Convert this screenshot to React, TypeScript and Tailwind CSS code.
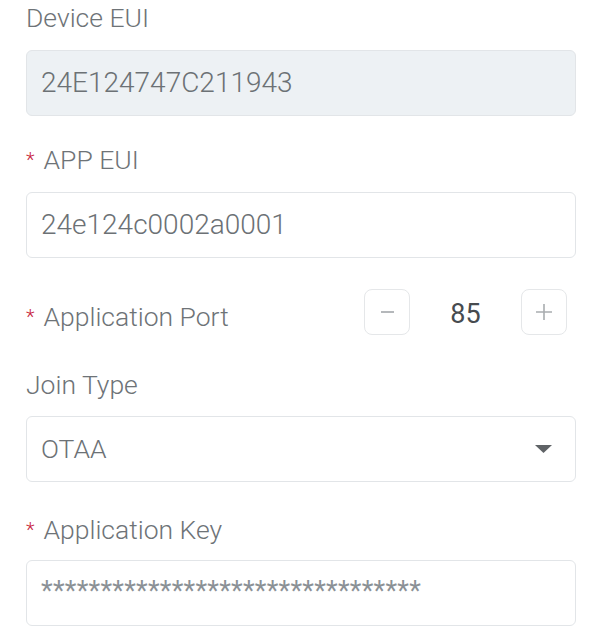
import React from 'react';

const Required = () => (
  <span className="text-[#c7253e] text-[20px] leading-none mr-[9px] self-start mt-[8px]">*</span>
);

const Label: React.FC<{ text: string; required?: boolean; className?: string }> = ({ text, required, className }) => (
  <div className={`flex items-center h-[36px] text-[26.5px] text-[#6e7377] ${className || ''}`}>
    {required && <Required />}
    <span>{text}</span>
  </div>
);

const Field: React.FC<{ children: React.ReactNode; disabled?: boolean }> = ({ children, disabled }) => (
  <div
    className={`flex items-center h-[66px] px-[14px] rounded-[6px] border border-[#e2e5e8] text-[28px] text-[#6c7175] ${
      disabled ? 'bg-[#edf1f4]' : 'bg-white'
    }`}
  >
    {children}
  </div>
);

export default function App() {
  return (
    <div className="w-[599px] h-[641px] bg-white pl-[26px] pr-[23px] font-['Roboto',sans-serif] font-light overflow-hidden">
      {/* Device EUI */}
      <Label text="Device EUI" className="mb-[14px]" />
      <Field disabled>24E124747C211943</Field>

      {/* APP EUI */}
      <Label text="APP EUI" required className="mt-[26px] mb-[14px]" />
      <Field>24e124c0002a0001</Field>

      {/* Application Port */}
      <div className="flex items-center justify-between h-[46px] mt-[31px]">
        <Label text="Application Port" required className="mt-[10px]" />
        <div className="flex items-center mr-[9px]">
          <button className="w-[46px] h-[46px] rounded-[8px] border border-[#e5e7e9] flex items-center justify-center">
            <span className="block w-[13px] h-[2px] bg-[#b5b8bb]" />
          </button>
          <span className="w-[111px] text-center text-[27px] text-[#474b4f] font-normal mt-[5px]">85</span>
          <button className="w-[46px] h-[46px] rounded-[8px] border border-[#e5e7e9] flex items-center justify-center">
            <svg width="18" height="18" viewBox="0 0 18 18">
              <path d="M9 1v16M1 9h16" stroke="#a9adb0" strokeWidth="1.6" />
            </svg>
          </button>
        </div>
      </div>

      {/* Join Type */}
      <Label text="Join Type" className="mt-[32px] mb-[13px]" />
      <div className="flex items-center justify-between h-[66px] pl-[14px] pr-[23px] rounded-[6px] border border-[#e2e5e8] text-[26.5px] text-[#6c7175]">
        <span>OTAA</span>
        <svg width="17" height="8" viewBox="0 0 17 8">
          <path d="M0 0h17L8.5 8z" fill="#5f6366" />
        </svg>
      </div>

      {/* Application Key */}
      <Label text="Application Key" required className="mt-[30px] mb-[12px]" />
      <Field>
        <span className="text-[#8b9196] text-[27px] tracking-[0.25px] -mt-[4px] font-normal">********************************</span>
      </Field>
    </div>
  );
}
